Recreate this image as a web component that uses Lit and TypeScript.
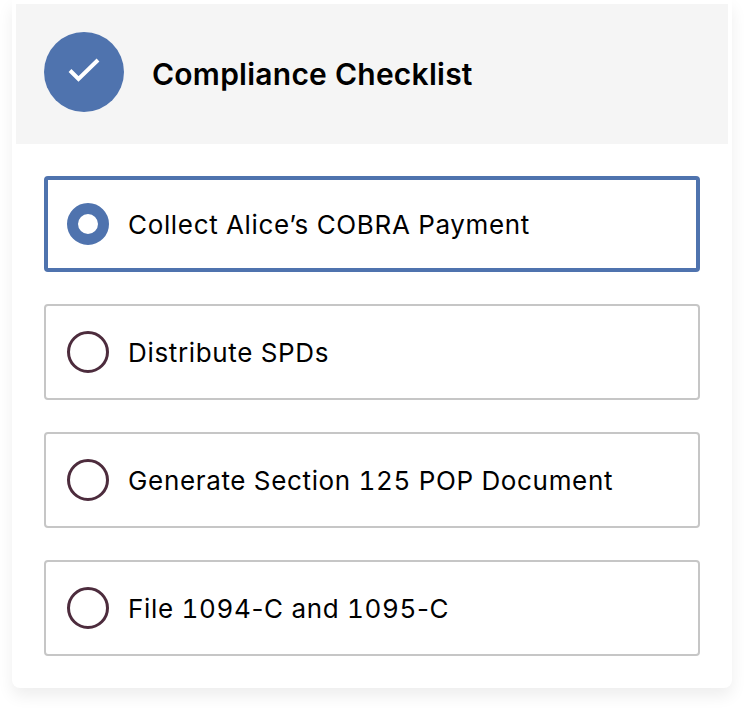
import { LitElement, html, css } from "lit";
import { customElement } from "lit/decorators.js";

const ITEMS = [
  "Collect Alice’s COBRA Payment",
  "Distribute SPDs",
  "Generate Section 125 POP Document",
  ["File 1094", "-", "C and 1095", "-", "C"],
];

@customElement("app-root")
export class AppRoot extends LitElement {
  static styles = css`
    :host {
      display: block;
      width: 744px;
      height: 712px;
      background: #fff;
      font-family: Inter, "Liberation Sans", sans-serif;
      color: #000;
      overflow: hidden;
    }
    .card {
      box-sizing: border-box;
      width: 720px;
      height: 688px;
      margin-left: 12px;
      padding: 4px 4px 32px;
      background: #fff;
      border-radius: 0 0 8px 8px;
      box-shadow: 0 8px 16px rgba(0, 0, 0, 0.07);
      display: flex;
      flex-direction: column;
    }
    .header {
      height: 140px;
      flex: none;
      background: #f5f5f5;
      display: flex;
      align-items: center;
      gap: 28px;
      padding-left: 28px;
    }
    .badge {
      width: 80px;
      height: 80px;
      margin-bottom: 4px;
      border-radius: 50%;
      background: #4f73ae;
      display: flex;
      align-items: center;
      justify-content: center;
    }
    h1 {
      margin: 0;
      font-size: 30px;
      font-weight: 600;
      letter-spacing: 0.25px;
    }
    .list {
      display: flex;
      flex-direction: column;
      gap: 32px;
      margin: 32px 28px 0;
    }
    .row {
      box-sizing: border-box;
      height: 96px;
      border: 2px solid #c6c6c6;
      border-radius: 4px;
      display: flex;
      align-items: center;
      gap: 19px;
      padding-left: 21px;
      font-size: 26px;
      font-weight: 380;
      font-variant-numeric: tabular-nums;
      letter-spacing: 0.66px;
    }
    .row.active {
      border: 4px solid #4f73ae;
      padding-left: 19px;
    }
    .radio {
      box-sizing: border-box;
      width: 42px;
      height: 42px;
      border-radius: 50%;
      border: 3px solid #4d2c3d;
      flex: none;
    }
    .active .radio {
      border: 11px solid #4f73ae;
    }
    .hy {
      font-variant-numeric: normal;
    }
  `;

  private label(t: string | string[]) {
    if (typeof t === "string") return t;
    return t.map((p) => (p === "-" ? html`<span class="hy">-</span>` : p));
  }

  render() {
    return html`
      <div class="card">
        <div class="header">
          <div class="badge">
            <svg width="32" height="32" viewBox="0 0 32 32" fill="none">
              <path d="M2 14.5 L10.5 23 L30 4" stroke="#fff" stroke-width="4" />
            </svg>
          </div>
          <h1>Compliance Checklist</h1>
        </div>
        <div class="list">
          ${ITEMS.map(
            (t, i) => html`
              <div class="row ${i === 0 ? "active" : ""}">
                <span class="radio"></span>
                <span>${this.label(t)}</span>
              </div>
            `
          )}
        </div>
      </div>
    `;
  }
}
